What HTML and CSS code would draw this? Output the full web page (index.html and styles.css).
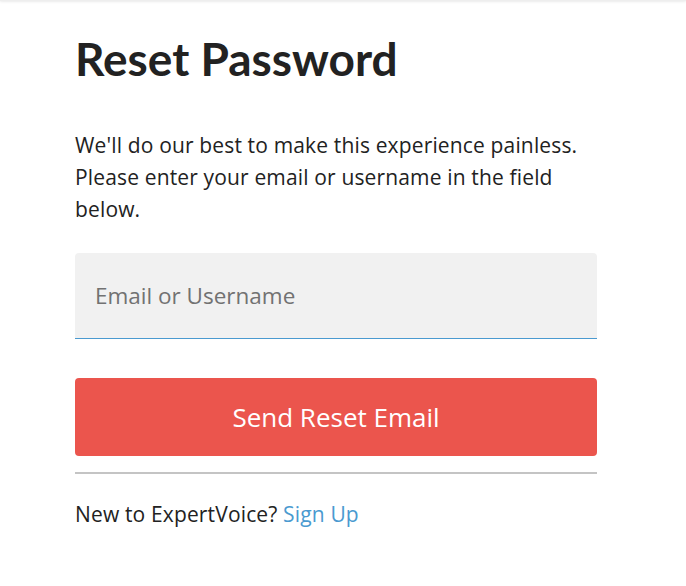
FILE: index.html
```html
<!DOCTYPE html>
<html>
<head>
<meta charset="utf-8">
<link rel="stylesheet" href="styles.css">
</head>
<body>
<div class="topbar"></div>
<main class="panel">
  <h1 class="title">Reset Password</h1>
  <p class="intro">We'll do our best to make this experience painless. Please enter your email or username in the field below.</p>
  <form class="form">
    <input class="field" type="text" placeholder="Email or Username">
    <button class="submit" type="button">Send Reset Email</button>
  </form>
  <hr class="divider">
  <p class="signup">New to ExpertVoice? <a class="link" href="#">Sign Up</a></p>
</main>
</body>
</html>
```
FILE: styles.css
```css
html, body {
  margin: 0;
  padding: 0;
  background: #fff;
}
body {
  font-family: "Open Sans", "Liberation Sans", sans-serif;
  color: #222;
}
.topbar {
  height: 1px;
  box-shadow: 0 0 3px rgba(0,0,0,0.25);
  background: #eee;
}
.panel {
  width: 522px;
  margin-left: 75px;
  padding-top: 30px;
}
.title {
  margin: 0;
  font-family: Lato, "Open Sans", sans-serif;
  font-size: 46px;
  font-weight: 700;
  line-height: 56px;
  color: #222;
}
.intro {
  margin: 42px 0 0;
  font-size: 21px;
  letter-spacing: 0.15px;
  line-height: 32px;
  color: #222;
}
.form {
  display: flex;
  flex-direction: column;
  margin-top: 28px;
}
.field {
  box-sizing: border-box;
  height: 86px;
  border: none;
  border-bottom: 1px solid #4a9ad0;
  border-radius: 4px 4px 0 0;
  background: #f1f1f1;
  padding: 0 20px;
  font-family: inherit;
  font-size: 22.5px;
  color: #222;
  outline: none;
}
.field::placeholder {
  color: #727272;
}
.submit {
  margin-top: 39px;
  height: 78px;
  border: none;
  border-radius: 4px;
  background: #eb554d;
  color: #fff;
  font-family: inherit;
  font-size: 26px;
  cursor: pointer;
}
.divider {
  margin: 16px 0 0;
  border: none;
  border-top: 2px solid #c4c4c4;
}
.signup {
  margin: 26px 0 0;
  font-size: 21px;
  letter-spacing: 0.15px;
  line-height: 28px;
}
.link {
  color: #4a9ad0;
  text-decoration: none;
}
```
